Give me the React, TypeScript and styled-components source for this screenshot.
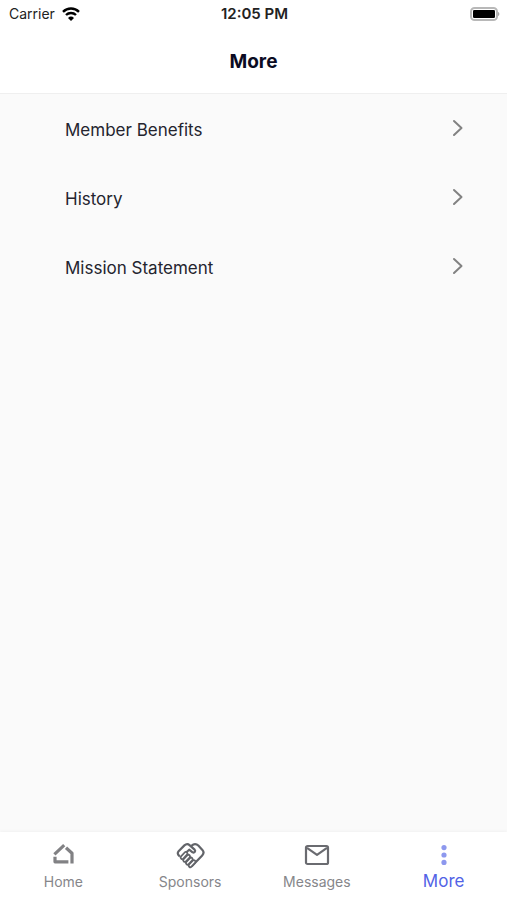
import React from "react";
import styled, { createGlobalStyle } from "styled-components";

const GlobalStyle = createGlobalStyle`
  *, *::before, *::after { box-sizing: border-box; }
  body {
    margin: 0;
    background: #fafafa;
    font-family: Inter, "Liberation Sans", sans-serif;
    color: #1c1c28;
  }
`;

const Screen = styled.div`
  display: flex;
  flex-direction: column;
  min-height: 100vh;
  background: #fafafa;
`;

const Top = styled.header`
  background: #fff;
  border-bottom: 1px solid #efefef;
`;

const StatusBar = styled.div`
  display: grid;
  grid-template-columns: 1fr auto 1fr;
  align-items: center;
  height: 28px;
  padding: 0 7px 0 9px;
  font-size: 14px;
  line-height: 20px;
  color: #222;
`;

const Carrier = styled.span`
  display: flex;
  align-items: center;
  gap: 7px;
`;

const Clock = styled.time`
  font-size: 15px;
  font-weight: 600;
`;

const Battery = styled.svg`
  justify-self: end;
`;

const Title = styled.h1`
  margin: 0;
  padding: 21px 0 18px;
  font-size: 19px;
  line-height: 26px;
  font-weight: 700;
  text-align: center;
  color: #0b0b22;
`;

const Menu = styled.ul`
  flex: 1;
  margin: 0;
  padding: 0;
  list-style: none;
`;

const MenuButton = styled.button`
  display: flex;
  align-items: center;
  justify-content: space-between;
  width: 100%;
  height: 69px;
  padding: 2px 43px 0 65px;
  border: 0;
  background: transparent;
  font: inherit;
  font-size: 17px;
  line-height: 24px;
  color: #24242e;
  text-align: left;
  cursor: pointer;
`;

const Chevron = styled.svg`
  flex: none;
  margin-bottom: 4px;
`;

const TabBar = styled.nav`
  display: flex;
  height: 68px;
  background: #fff;
  box-shadow: 0 -1px 3px rgba(0, 0, 0, 0.04);
`;

const Tab = styled.a<{ $active?: boolean }>`
  flex: 1;
  display: flex;
  flex-direction: column;
  align-items: center;
  padding-top: 7px;
  font-size: ${(p) => (p.$active ? 17 : 14)}px;
  line-height: ${(p) => (p.$active ? 20 : 22)}px;
  color: ${(p) => (p.$active ? "#5263e6" : "#86868a")};
  text-decoration: none;
`;

const IconSlot = styled.span`
  display: flex;
  align-items: center;
  justify-content: center;
  height: 32px;
`;

const WifiIcon = () => (
  <svg width="18" height="14" viewBox="0 0 18 14" aria-hidden="true">
    <g fill="none" stroke="#000" strokeWidth="2.4">
      <path d="M1 4.8a11.4 11.4 0 0 1 16 0" />
      <path d="M4 8a7.2 7.2 0 0 1 10 0" />
    </g>
    <path d="M9 14 6 10.9a4.3 4.3 0 0 1 6 0Z" fill="#000" />
  </svg>
);

const BatteryIcon = () => (
  <Battery width="31" height="14" viewBox="0 0 31 14" role="img" aria-label="Battery full">
    <rect x="2" y="1" width="26" height="12" rx="3.6" fill="#fff" stroke="#b8b8b8" strokeWidth="2" />
    <rect x="4" y="3" width="22" height="8" rx="1.2" fill="#000" />
    <path d="M29 5c1.8.5 1.8 3.5 0 4Z" fill="#a8a8a8" />
  </Battery>
);

const ChevronIcon = () => (
  <Chevron width="12" height="18" viewBox="0 0 12 18" aria-hidden="true">
    <path d="m2 2 7.5 7L2 16" fill="none" stroke="#828282" strokeWidth="2" strokeLinecap="round" strokeLinejoin="round" />
  </Chevron>
);

const HomeIcon = () => (
  <svg width="24" height="24" viewBox="0 0 24 24" aria-hidden="true">
    <g fill="none" stroke="#818184" strokeWidth="3.2" strokeLinejoin="round">
      <path d="m3.4 11.4 9.8-9.2" />
      <path d="m15 4.8 6 5.4v10.2" />
      <path d="M4 13.8v5h13.4" />
    </g>
  </svg>
);

const fingers = [
  [16.3, 25.6],
  [13.5, 23],
  [10.8, 20.2],
  [8.2, 17.4],
];

const HandshakeIcon = () => (
  <svg width="32" height="30" viewBox="0 0 32 30" fill="none" strokeLinecap="round" strokeLinejoin="round" aria-hidden="true">
    <g stroke="#626469" strokeWidth="2.2">
      <path d="M18 26 28.2 15.4C29.8 13.7 29.8 11.5 28.4 9.9L24.3 5.5C22.4 3.7 19.7 3.7 17.8 5.6" />
      <path d="M5.2 15.8C3.4 14.4 3.4 12.5 4.6 11.2L10.4 5.4C12 3.9 14.2 3.9 15.8 5.3L20.6 9.6C22 11.2 20.4 13.2 18.6 12.3L15.2 9.7 10.4 14" />
    </g>
    {fingers.map(([x, y]) => (
      <g key={x}>
        <path d={`M${x} ${y}l3.6-3.8`} stroke="#626469" strokeWidth="5" />
        <path d={`M${x} ${y}l3.6-3.8`} stroke="#fff" strokeWidth="1.4" />
      </g>
    ))}
  </svg>
);

const MailIcon = () => (
  <svg width="26" height="22" viewBox="0 0 26 22" aria-hidden="true">
    <g fill="none" stroke="#6a6b70" strokeWidth="2.2" strokeLinejoin="round">
      <rect x="2" y="2" width="22" height="18" rx="1.6" />
      <path d="m3 3.8 10 7 10-7" />
    </g>
  </svg>
);

const DotsIcon = () => (
  <svg width="8" height="22" viewBox="0 0 8 22" fill="#8d98ee" aria-hidden="true">
    <circle cx="4" cy="3.6" r="2.6" />
    <circle cx="4" cy="11" r="2.6" />
    <circle cx="4" cy="18.4" r="2.6" />
  </svg>
);

const menuItems = ["Member Benefits", "History", "Mission Statement"];

const tabs = [
  { label: "Home", href: "#home", icon: <HomeIcon /> },
  { label: "Sponsors", href: "#sponsors", icon: <HandshakeIcon /> },
  { label: "Messages", href: "#messages", icon: <MailIcon /> },
  { label: "More", href: "#more", icon: <DotsIcon />, active: true },
];

export default function App() {
  return (
    <Screen>
      <GlobalStyle />
      <Top>
        <StatusBar>
          <Carrier>
            Carrier
            <WifiIcon />
          </Carrier>
          <Clock>12:05 PM</Clock>
          <BatteryIcon />
        </StatusBar>
        <Title>More</Title>
      </Top>
      <Menu>
        {menuItems.map((item) => (
          <li key={item}>
            <MenuButton type="button">
              {item}
              <ChevronIcon />
            </MenuButton>
          </li>
        ))}
      </Menu>
      <TabBar aria-label="Main">
        {tabs.map((tab) => (
          <Tab key={tab.label} href={tab.href} $active={tab.active} aria-current={tab.active ? "page" : undefined}>
            <IconSlot>{tab.icon}</IconSlot>
            {tab.label}
          </Tab>
        ))}
      </TabBar>
    </Screen>
  );
}
